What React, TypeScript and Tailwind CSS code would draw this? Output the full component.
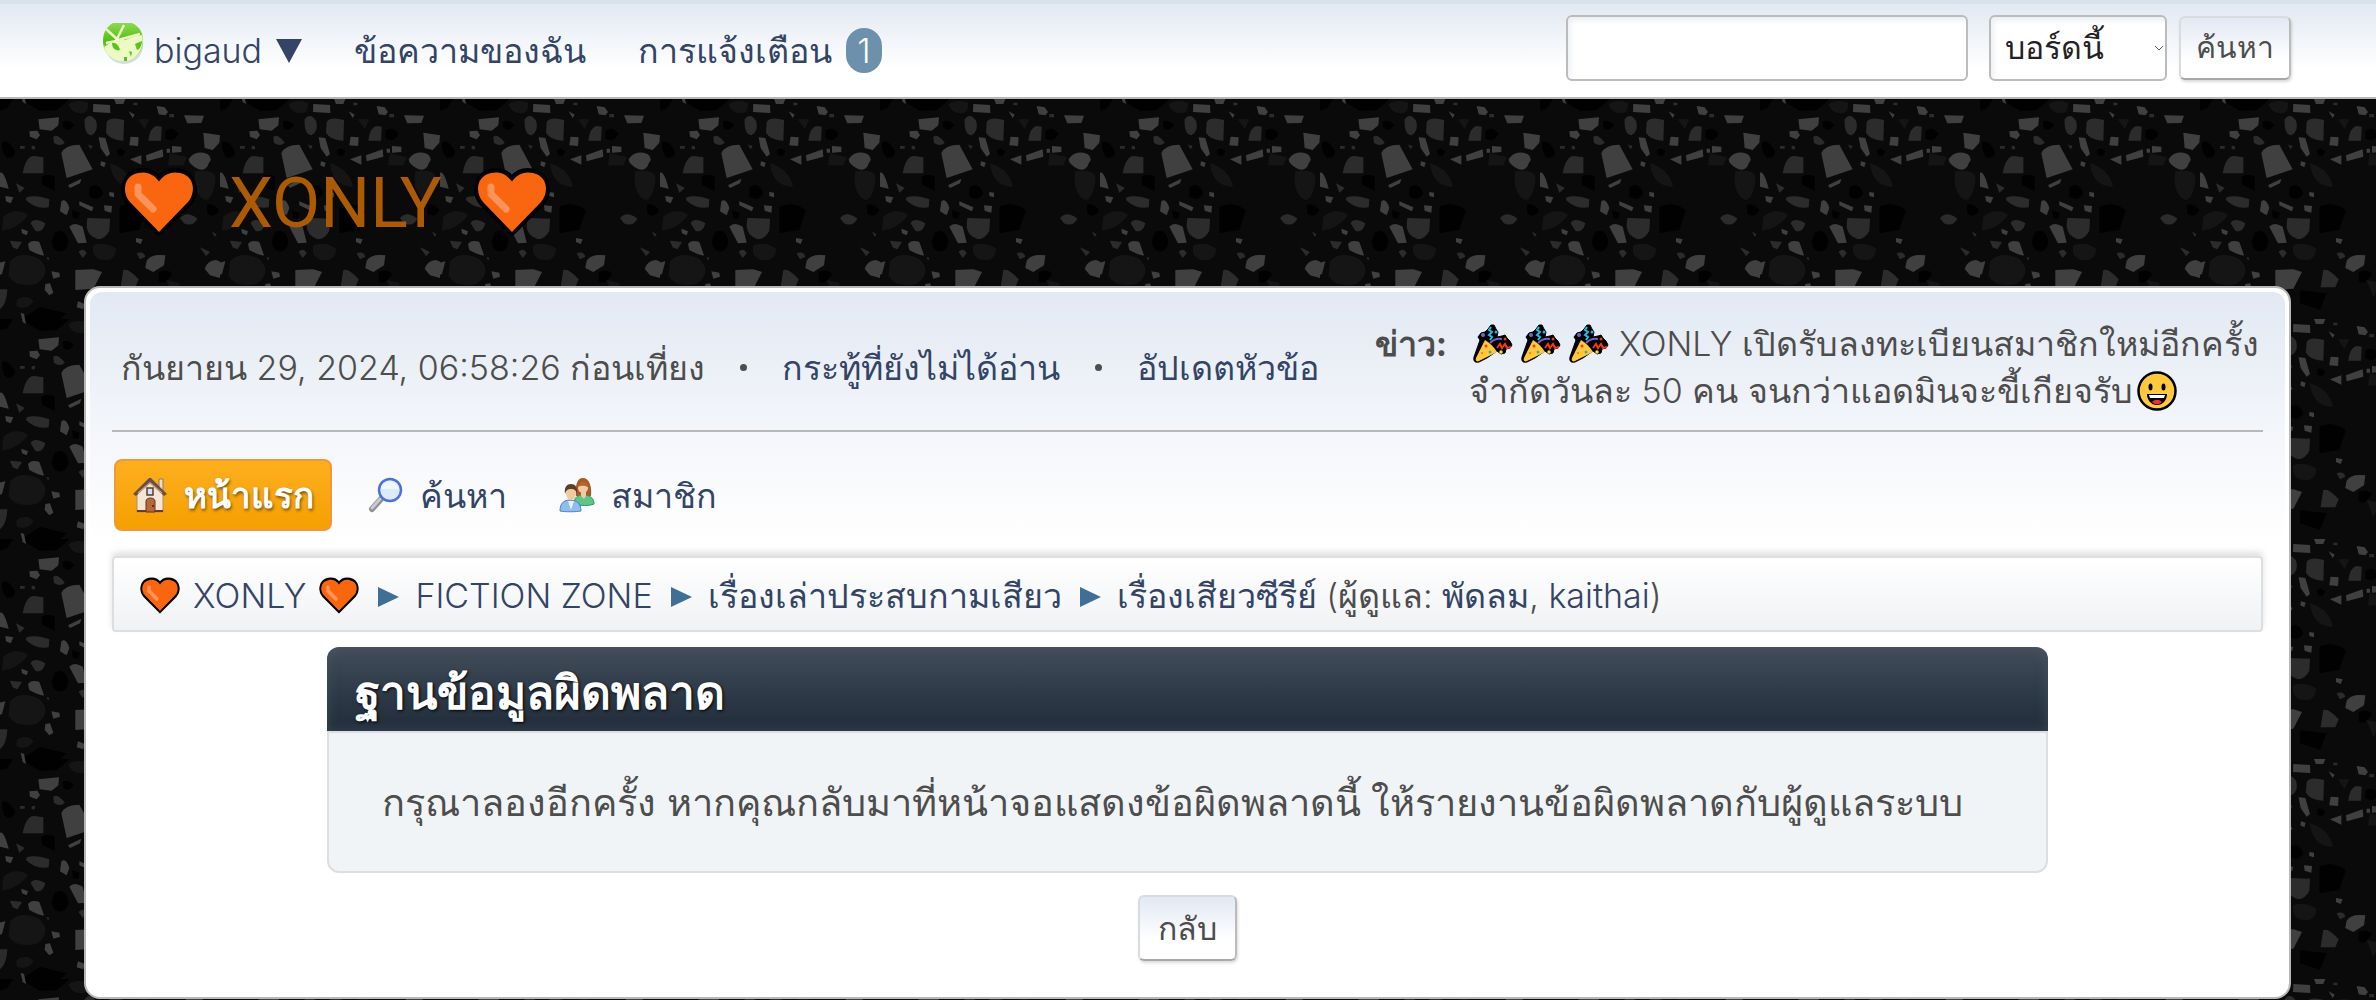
import type { ReactNode } from "react";

const light =
  "M280 42l50 3 1 24-52-3zM470 48l24 4 10 14-8 10-20-3zM552 76l60 1-8 22-42 1zM115 88l62-6-2 24-20 16-36-4zM88 124l24-2 8 14-10 12-20-8zM296 142l20 2 14 48-10 8-18-26zM392 140l24 2-2 26-26-2zM610 128l50 8-2 22-20 22-24-6zM184 190q10-26 54-26l40 74-78 26zM438 196l50-18 2 22-50 14zM516 168l28 2v16l-28 2zM500 176h10v12h-10zM390 208l34-12v28zM566 208q18-30 56-16 18 12 4 28-6 24-30 18-30-14-30-30zM0 248q12-6 26 48l-26-6zM660 248q12-6 26 48l-26-6zM184 334q14-12 24 20l-8 22-20-12zM204 286l40-20-4 14-30 14zM238 334l42 18-4 12-38-18zM312 346l24 2-2 20-20-6zM16 318l24 4-8 18-14-6zM208 410q14-16 40 0l12 48-26 2zM84 462q10-14 34-6l14 40q-12 2-44-16zM64 416l20 8-4 12-14-6zM408 444l20 4-6 14-14-6zM440 512q14-22 56-16l-4 30-32 20-24-12zM614 536q8-24 34-26l30 14-18 40-30-8zM226 540l54-2 26 8-26 50-54 4zM154 544l24 4 2 12-20 6zM136 582l14-2 10 28-12 8-14-16zM234 634l20 8-4 16-20-6zM62 668l10 4 6 30-10-6zM-10 520l26-6-10 38-16 6zM386 64l18 10-6 10zM328 306l14 2v14l-14-4zM303 214l14 4-4 14-12-6zM340 22h38l-8 20h-22zM660 524l16-6-8 34-8 6z";
const mid =
  "M320 96q10-18 52-6l-2 62q-40-2-52-24zM254 88q16-22 34 4 10 30-14 44-22-2-20-48zM445 152q4-38 24-44l16 2-2 42zM68 250q10-52 34-52l28 4v48zM80 322q30-8 68 6l-2 24q-40 6-68-22zM262 384l68 2-2 36q-10 22-34 26-34-12-34-40zM92 400q10-20 44 0-8 30-30 22zM160 142q10-14 34 16-14 14-32 0zM540 384q20-24 52 2-14 26-40 14zM48 280l26 14-16 14zM30 452l36 4-14 22-14-6zM236 486q14-16 24 4l-12 14zM370 540q16-6 46 28l-10 24h-44zM0 598h22q-2 44-22 60zM600 472l30 14-12 12zM410 490q20-8 26 10l-16 8zM140 500l8 4-4 8zM508 72h14v10h-14zM400 38h12v8h-12zM60 168h14v8H60zM95 168h10v10H95zM264 164l14 4-6 10zM636 424l14 10-6 6z";
const dim =
  "M30 515q30-36 88-8 40 40-8 74-62 14-84-22zM280 466q40-12 68 10 0 36-40 34-36-8-28-44zM10 380q40-30 74-4-30 40-78 46zM206 44q20-18 58-6 2 32-20 32-30-2-38-26zM330 220q60 20 68 70-60 0-68-70zM586 244q60-8 60 20-4 60-30 66-40-20-30-86zM414 88h34l-14 28zM50 630q30-20 50 4-20 30-50 14zM510 190l50 12-10 24h-46zM500 570l40 10-20 40z";
const dark =
  "M60 27h150l-40 34-50 2zM188 96q14-10 34 8-14 24-32 10zM496 122q20-14 40 8-10 30-40 16zM6 156q20-10 40 30-4 20-26 18-16-16-14-48zM664 156q10-10 24 30l-10 14zM124 260q20-12 40 0v44l-38-20zM268 290q30-16 42 20-16 30-44 8zM358 350q40-20 80 10l-20 60-60 10zM166 426q30-14 40 30-10 40-40 24-20-20 0-54zM620 344q20-6 38 16-10 26-36 12zM350 180q10-12 26 4-6 22-24 10zM476 546q30-12 40 6-24 40-40 20zM60 690l60-40 80 20-20 20zM300 600l80 10-20 50-60-20zM216 360l24 8-6 20-16-4zM0 27h40l-20 30-20 4z";

function Chips() {
  return (
    <>
      <path d={dark} fill="#010101" />
      <path d={dim} fill="#151515" />
      <path d={mid} fill="#2c2c2c" />
      <path d={light} fill="#404040" />
    </>
  );
}

function Backdrop() {
  return (
    <svg className="absolute inset-0 -z-10 h-full w-full" aria-hidden="true">
      <defs>
        <pattern
          id="terrazzo"
          width="660"
          height="660"
          patternUnits="userSpaceOnUse"
          patternTransform="translate(0 99) scale(0.33333)"
        >
          <rect width="660" height="660" fill="#0a0a0a" />
          <g transform="translate(0 -27)">
            <Chips />
          </g>
          <g transform="translate(0 -687)">
            <Chips />
          </g>
        </pattern>
      </defs>
      <rect width="100%" height="100%" fill="url(#terrazzo)" />
    </svg>
  );
}

function Heart({ className }: { className: string }) {
  return (
    <svg viewBox="0 0 80 71" className={className} aria-hidden="true">
      <path
        d="M40 68L9 37C-1 25 4 6 19 3 29 1 36 5 40 10 44 5 51 1 61 3 76 6 81 25 71 37z"
        fill="#000"
        stroke="#000"
        strokeWidth="3"
      />
      <path d="M40 65L11 35C3 26 4 9 19 6 29 4 35 8 40 14.500 45 8 51 4 61 6 76 9 77 26 69 35z" fill="#fa660f" />
      <path d="M19 20v7l15 15" fill="none" stroke="#fc935a" strokeWidth="7" strokeLinecap="round" strokeLinejoin="round" />
    </svg>
  );
}

function Party() {
  return (
    <svg viewBox="0 0 40 40" className="h-10 w-10 shrink-0" aria-hidden="true">
      <path
        d="M12 8l3-3 3-4h3l2 4 2 3-1 5 5-1 3-1 2 3 3 3 2 4-2 3-4 1-1 4-4 1-4-3-10 7-8 4c-4 1-6-1-5-5l6-17-2-3 3-4z"
        fill="#000"
        stroke="#000"
        strokeWidth="1"
        strokeLinejoin="round"
      />
      <path d="M12 16c5 3 9 7 12 12L6 37c-2 1-4 0-3-3z" fill="#ffc83d" />
      <path d="M18 3l-2 3 3 2-3 3 3 2-2 3" fill="none" stroke="#26b8e8" strokeWidth="2" />
      <path d="M17 19c3-3 7-5 12-4" fill="none" stroke="#7a5fd0" strokeWidth="2" />
      <path d="M24 24l3-4 2 4 3-4 2 4 4-1" fill="none" stroke="#f03a17" strokeWidth="2" />
      <circle cx="10" cy="11" r="2" fill="#7a5fd0" />
      <circle cx="23" cy="8" r="1.500" fill="#26b8e8" />
      <circle cx="32" cy="15" r="1.500" fill="#f03a17" />
      <circle cx="13" cy="22" r="1.500" fill="#f03a17" />
      <circle cx="17" cy="28" r="1.500" fill="#2fb8a0" />
      <circle cx="9" cy="29" r="1.200" fill="#fa8a1e" />
      <circle cx="28" cy="28" r="1.700" fill="#ffe03d" />
    </svg>
  );
}

function Grin() {
  return (
    <svg viewBox="0 0 40 40" className="h-10 w-10 shrink-0" aria-hidden="true">
      <circle cx="20" cy="20" r="18.500" fill="#ffc83d" stroke="#000" strokeWidth="2.500" />
      <ellipse cx="13.500" cy="16" rx="2" ry="3.500" fill="#000" />
      <ellipse cx="26.500" cy="16" rx="2" ry="3.500" fill="#000" />
      <path d="M10 23h20c0 6-4 11-10 11s-10-5-10-11z" fill="#000" />
      <path d="M12 24h16l-1 3H13z" fill="#fff" />
      <path d="M15 31c3-3 7-3 10 0-3 3-7 3-10 0z" fill="#e8322a" />
    </svg>
  );
}

function Avatar() {
  return (
    <svg viewBox="0 0 42 44" className="h-11 w-[42px]" aria-hidden="true">
      <defs>
        <linearGradient id="leaf" x1="0" y1="0" x2="0" y2="1">
          <stop offset="0" stopColor="#8fd850" />
          <stop offset="0.500" stopColor="#4fbf12" />
          <stop offset="1" stopColor="#eafbb8" />
        </linearGradient>
      </defs>
      <ellipse cx="22" cy="24" rx="19" ry="19" fill="#d6dbe2" />
      <path d="M11 2h19c8 4 11 10 11 18 0 12-9 20-20 20S1 32 1 20C1 12 4 6 11 2z" fill="url(#leaf)" />
      <path d="M2 26c6-4 8-5 12-7 8 3 12-3 26-5 1 5 1 7 0 11-3 9-10 15-19 15S4 34 2 26z" fill="#eefac4" />
      <path d="M4 8l12 11 22-6M22 4L14 20 4 22M14 18l12 4" stroke="#eefac4" strokeWidth="2.500" fill="none" />
      <path d="M10 22c4-1 7 3 8 7-4 1-8-1-8-7zM33 23l7-3c0 5-3 9-5 9zM27 30l3 1-1 5zM22 36h3v4h-3z" fill="#57c41c" />
    </svg>
  );
}

function House() {
  return (
    <svg viewBox="0 0 36 36" className="h-9 w-9 shrink-0" aria-hidden="true">
      <path d="M27 2h4v12h-4z" fill="#e9dccb" stroke="#9b7357" />
      <path d="M5 16L18 4l13 12v19H5z" fill="#f3e6d6" stroke="#b48b6a" />
      <path d="M1 17L17 1h2l16 16-3 2L18 6 4 19z" fill="#6b5042" />
      <path d="M6 16L18 6l12 10" fill="none" stroke="#c9a183" strokeWidth="1.500" />
      <path d="M15 11h6v7h-6z" fill="#cfe4f7" stroke="#5c3a28" strokeWidth="1.500" />
      <path d="M14 35V24c0-4 9-4 9 0v11z" fill="#b5683c" stroke="#6b3318" />
      <circle cx="21" cy="29" r="1" fill="#4a1f0b" />
      <path d="M5 33h9v2H5zM23 33h8v2h-8z" fill="#6b3a28" />
    </svg>
  );
}

function Magnifier() {
  return (
    <svg viewBox="0 0 36 36" className="h-9 w-9 shrink-0" aria-hidden="true">
      <path d="M13 22L4 32" stroke="#8f8f95" strokeWidth="6" strokeLinecap="round" />
      <path d="M12 22L4 31" stroke="#c9c9ce" strokeWidth="3" strokeLinecap="round" />
      <circle cx="22" cy="13" r="11" fill="#dcebfb" stroke="#4f6fdc" strokeWidth="2.500" />
      <path d="M13 12c1-6 6-8 11-7 4 1 7 4 7 8-6-2-12-1-18-1z" fill="#f1f7fe" />
    </svg>
  );
}

function Members() {
  return (
    <svg viewBox="0 0 36 36" className="h-9 w-9 shrink-0" aria-hidden="true">
      <path d="M17 19c-1-11 1-18 7-18s9 8 8 18z" fill="#a85a2c" />
      <path d="M15 27c0-7 4-9 9-9 7 0 11 3 11 9-5 2-14 2-20 0z" fill="#5fc487" stroke="#2f9a5c" />
      <path d="M22 15h5v4l-2 3-3-3z" fill="#f3c9a0" />
      <circle cx="24" cy="11" r="5" fill="#f3c9a0" />
      <path d="M19 10c1-5 4-6 6-5 3 0 4 3 4 5-4-1-5-2-10 0z" fill="#b8642e" />
      <path d="M1 34c0-8 4-11 10-11s11 3 11 11c-5 1-16 1-21 0z" fill="#8fbdf0" stroke="#4a80c8" />
      <path d="M9 24l3 9 3-9z" fill="#e9f2fc" />
      <ellipse cx="12" cy="16" rx="5" ry="7" fill="#f3c9a0" />
      <path d="M6 17c-1-7 2-10 6-10s7 3 6 10c-1-4-3-5-6-5s-5 1-6 5z" fill="#5a4028" />
    </svg>
  );
}

function Crumb({ children }: { children: ReactNode }) {
  return (
    <li className="flex items-center gap-4">
      <svg viewBox="0 0 21 20" className="mt-1 h-5 w-[21px]" aria-hidden="true">
        <path d="M0 0l21 10L0 20z" fill="#3f6f94" />
      </svg>
      <span>{children}</span>
    </li>
  );
}

const buttonStyle =
  "rounded-md border-2 border-t-[#d8dce0] border-l-[#d8dce0] border-r-[#bbb] border-b-[#a8a8a8] bg-linear-to-b from-[#e2e9f3] to-white to-70% text-[#4d4d4d] shadow-[1px_2px_3px_rgba(0,0,0,0.15)]";

export default function App() {
  return (
    <div className="relative isolate min-h-screen font-['Inter',sans-serif] text-[34px]/[47px] font-light text-[#4d4d4d]">
      <Backdrop />
      <header className="border-t-4 border-b-2 border-t-[#d8e2ea] border-b-[#b8b8b8] bg-linear-to-b from-[#e2e9f3] to-white to-70%">
        <div className="flex h-[93px] items-center justify-between pr-[85px] pl-[102px] text-[#334466]">
          <nav className="flex items-center gap-[52px]">
            <a href="#profile" className="flex items-center gap-2.5">
              <span className="pb-4">
                <Avatar />
              </span>
              <span>bigaud</span>
              <svg viewBox="0 0 26 24" className="ml-1 h-6 w-[26px]" aria-hidden="true">
                <path d="M0 0h26L13 24z" fill="#334466" />
              </svg>
            </a>
            <a href="#messages">ข้อความของฉัน</a>
            <a href="#alerts" className="flex items-center gap-3.5">
              การแจ้งเตือน
              <span className="flex h-[45px] w-9 items-center justify-center rounded-full bg-[#6d90ad] text-white">
                1
              </span>
            </a>
          </nav>
          <form className="flex items-center pb-1.5 text-[32px]" onSubmit={(e) => e.preventDefault()}>
            <input
              type="text"
              aria-label="ค้นหา"
              className="mr-[21px] h-[66px] w-[402px] rounded-md border-2 border-[#bbb] bg-white px-3 shadow-[inset_3px_4px_5px_#eef1f5]"
            />
            <span className="relative mr-3">
              <select
                aria-label="ขอบเขตการค้นหา"
                className="block h-[66px] w-[178px] appearance-none rounded-md border-2 border-[#bbb] bg-white pl-[14px] text-[#222] shadow-[inset_3px_4px_5px_#eef1f5]"
              >
                <option>บอร์ดนี้</option>
              </select>
              <svg viewBox="0 0 8 6" className="pointer-events-none absolute top-[30px] right-1 h-1.5 w-2" aria-hidden="true">
                <path d="M0 1l4 4 4-4" fill="none" stroke="#555" />
              </svg>
            </span>
            <button type="submit" className={`${buttonStyle} h-16 w-28 text-[30px]`}>
              ค้นหา
            </button>
          </form>
        </div>
      </header>

      <div className="flex h-[187px] items-center px-[119px] pt-5">
        <h1>
          <a
            href="#home"
            className="flex items-center gap-[30px] font-['Roboto',sans-serif] text-[70px]/[90px] font-normal text-[#ad5a05]"
          >
            <Heart className="h-[71px] w-20" />
            XONLY
            <Heart className="h-[71px] w-20" />
          </a>
        </h1>
      </div>

      <div className="mr-[85px] ml-[84px] rounded-2xl border-2 border-[#b8b8b8] bg-white p-1">
        <main className="rounded-xl bg-linear-to-b from-[#e2e9f3] via-[#f5f7fb] via-[150px] to-white to-[250px] px-[22px] pb-8">
          <div className="flex h-[140px] items-center justify-between border-b-2 border-[#b8b8b8] pt-3 pr-1 pl-[9px]">
            <ul className="flex items-center gap-[35px] whitespace-nowrap">
              <li>กันยายน 29, 2024, 06:58:26 ก่อนเที่ยง</li>
              <li aria-hidden="true" className="h-[7px] w-[7px] rounded-full bg-[#4d4d4d]" />
              <li>
                <a href="#unread" className="text-[#334466]">
                  กระทู้ที่ยังไม่ได้อ่าน
                </a>
              </li>
              <li aria-hidden="true" className="h-[7px] w-[7px] rounded-full bg-[#4d4d4d]" />
              <li>
                <a href="#updated" className="text-[#334466]">
                  อัปเดตหัวข้อ
                </a>
              </li>
            </ul>
            <div className="flex gap-[22px] whitespace-nowrap">
              <h2 className="font-bold">ข่าว:</h2>
              <div>
                <p className="flex items-center">
                  <span className="mr-2.5 flex gap-2 pl-1">
                    <Party />
                    <Party />
                    <Party />
                  </span>
                  XONLY เปิดรับลงทะเบียนสมาชิกใหม่อีกครั้ง
                </p>
                <p className="flex items-center gap-1">
                  จำกัดวันละ 50 คน จนกว่าแอดมินจะขี้เกียจรับ
                  <Grin />
                </p>
              </div>
            </div>
          </div>

          <nav className="flex items-center gap-9 px-0.5 pt-[27px] pb-[25px] text-[#334466]">
            <a
              href="#home"
              className="flex h-[72px] items-center gap-4 rounded-lg border-2 border-[#f0993c] bg-linear-to-b from-[#fdaf1c] to-[#f5a000] px-4 text-[35px] font-bold text-white text-shadow-[1px_2px_3px_rgba(0,0,0,0.5)]"
            >
              <House />
              หน้าแรก
            </a>
            <a href="#search" className="flex items-center gap-4">
              <Magnifier />
              ค้นหา
            </a>
            <a href="#members" className="ml-4 flex items-center gap-4">
              <Members />
              สมาชิก
            </a>
          </nav>

          <ol className="flex h-[76px] items-center gap-[18px] rounded border-2 border-[#dcdfe2] bg-linear-to-b from-white to-[#f0f2f4] px-[25px] pt-0.5 whitespace-nowrap text-[#334466] shadow-[0_-4px_6px_rgba(0,0,0,0.12)]">
            <li>
              <a href="#home" className="flex items-center gap-3">
                <Heart className="h-[37px] w-[42px]" />
                XONLY
                <Heart className="h-[37px] w-[42px]" />
              </a>
            </li>
            <Crumb>
              <a href="#zone">FICTION ZONE</a>
            </Crumb>
            <Crumb>
              <a href="#stories">เรื่องเล่าประสบกามเสียว</a>
            </Crumb>
            <Crumb>
              <a href="#series">เรื่องเสียวซีรีย์</a>{" "}
              <span className="text-[#4d4d4d]">
                (ผู้ดูแล:{" "}
                <a href="#mod-1" className="text-[#334466]">
                  พัดลม
                </a>
                ,{" "}
                <a href="#mod-2" className="text-[#334466]">
                  kaithai
                </a>
                )
              </span>
            </Crumb>
          </ol>

          <section className="mx-auto mt-[15px] w-4/5">
            <h3 className="flex h-[84px] items-center rounded-t-xl bg-linear-to-b from-[#434d5a] via-[#2c3846] via-60% to-[#222d3a] px-7 pt-1.5 text-[46px] font-bold text-white shadow-[inset_0_0_12px_rgba(80,95,110,0.5)] text-shadow-[1px_1px_3px_#000]">
              ฐานข้อมูลผิดพลาด
            </h3>
            <div className="flex h-[142px] items-center rounded-b-xl border-2 border-[#dcdfe2] bg-[#f0f4f7] px-[53px] text-[38px] whitespace-nowrap">
              กรุณาลองอีกครั้ง หากคุณกลับมาที่หน้าจอแสดงข้อผิดพลาดนี้ ให้รายงานข้อผิดพลาดกับผู้ดูแลระบบ
            </div>
          </section>
          <div className="flex justify-center pt-[22px]">
            <button type="button" className={`${buttonStyle} h-[66px] px-[18px] text-[32px]`}>
              กลับ
            </button>
          </div>
        </main>
      </div>
    </div>
  );
}
